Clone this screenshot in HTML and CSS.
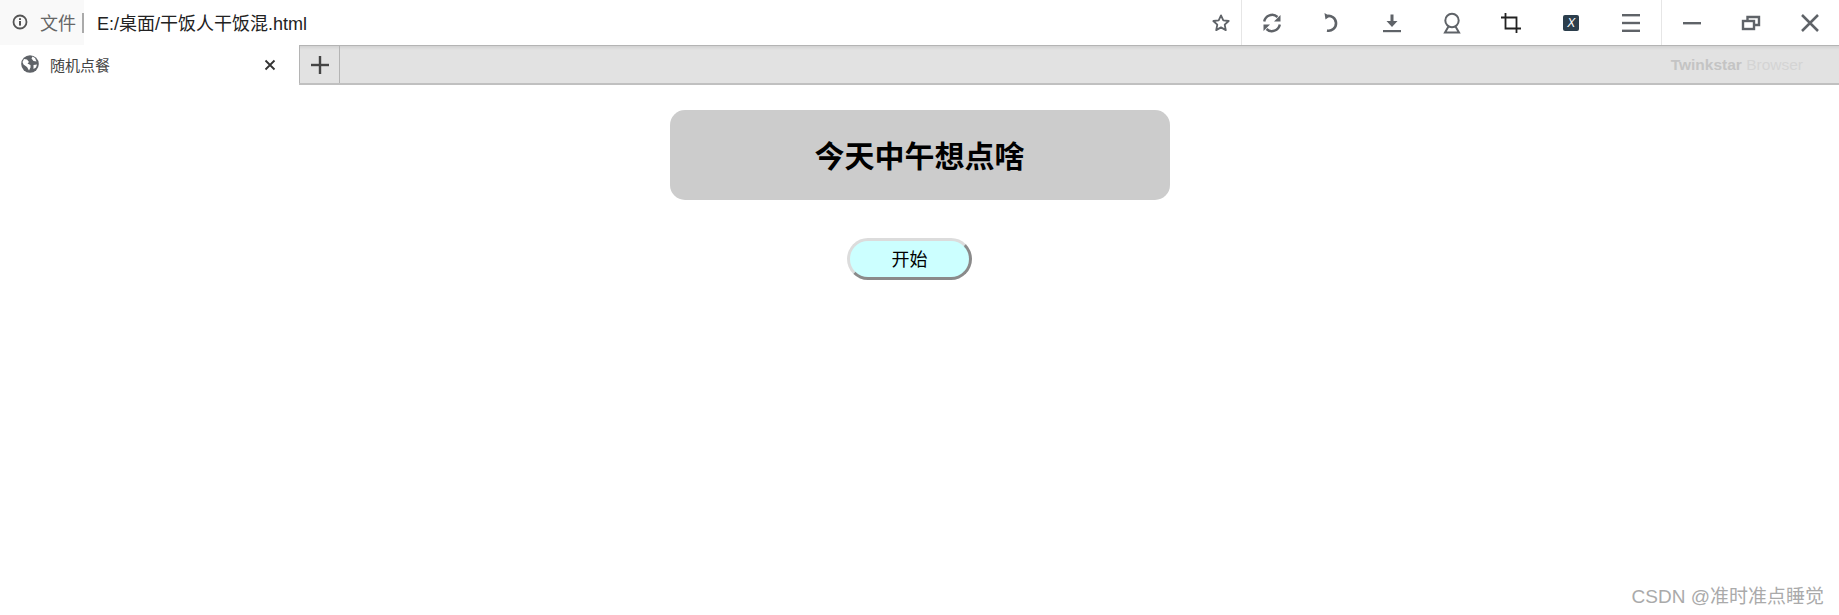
FILE: index.html
```html
<!DOCTYPE html>
<html lang="zh-CN">
<head>
<meta charset="utf-8">
<title>随机点餐</title>
<link rel="stylesheet" href="styles.css">
</head>
<body>
<header class="toolbar">
  <div class="security">
    <svg class="ico-info" width="16" height="16" viewBox="0 0 16 16"><circle cx="8" cy="8" r="6.500" fill="none" stroke="#555" stroke-width="1.800"/><rect x="7" y="7" width="2" height="4.600" fill="#555"/><rect x="7" y="4.200" width="2" height="1.800" fill="#555"/></svg>
    <span class="sec-label">文件</span>
  </div>
  <div class="url">E:/桌面/干饭人干饭混.html</div>
  <div class="star-cell">
    <svg width="20" height="20" viewBox="0 0 20 20"><path d="M10 2.400l2.300 5 5.400.6-4 3.700 1.100 5.400-4.800-2.700-4.800 2.700 1.100-5.400-4-3.700 5.400-.6z" fill="none" stroke="#5f6368" stroke-width="1.800" stroke-linejoin="round"/></svg>
  </div>
  <div class="tools">
    <div class="tool"><svg width="22" height="22" viewBox="0 0 22 22" fill="none" stroke="#5f6368" stroke-width="2.400"><path d="M3.200 9.500A8 8 0 0 1 16.500 5"/><path d="M18.800 12.500A8 8 0 0 1 5.500 17"/><path d="M19.500 3v6.500H13z" fill="#5f6368" stroke="none"/><path d="M2.500 19v-6.500H9z" fill="#5f6368" stroke="none"/></svg></div>
    <div class="tool"><svg width="22" height="22" viewBox="0 0 22 22" fill="none" stroke="#5f6368" stroke-width="2.600"><path d="M5.500 4.200a7.400 7.400 0 1 1 .5 14.300"/><path d="M3.500 1l5.500 3.200-4.500 3.300z" fill="#5f6368" stroke="none"/></svg></div>
    <div class="tool"><svg width="20" height="20" viewBox="0 0 20 20" fill="#5f6368"><path d="M8.500 1.500h3v6.500h4l-5.500 6-5.500-6h4z"/><rect x="1" y="17" width="18" height="2.200"/></svg></div>
    <div class="tool"><svg width="20" height="22" viewBox="0 0 20 22" fill="none" stroke="#5f6368" stroke-width="2"><circle cx="10" cy="8.500" r="6.700"/><path d="M6.500 14.500L3 20.500h14l-3.500-6"/></svg></div>
    <div class="tool"><svg width="22" height="22" viewBox="0 0 22 22" fill="none" stroke="#222" stroke-width="1.800"><path d="M5.500 1v15.500H21"/><path d="M1 5.500h15.500V21"/></svg></div>
    <div class="tool"><div class="app-badge">X</div></div>
    <div class="tool"><svg width="20" height="20" viewBox="0 0 20 20" fill="#5f6368"><rect x="1" y="1" width="18" height="2.400"/><rect x="1" y="8.800" width="18" height="2.400"/><rect x="1" y="16.600" width="18" height="2.400"/></svg></div>
  </div>
  <div class="winctl">
    <div class="win"><svg width="20" height="20" viewBox="0 0 20 20"><rect x="1" y="9" width="18" height="2.400" fill="#5f6368"/></svg></div>
    <div class="win"><svg width="20" height="20" viewBox="0 0 20 20" fill="none" stroke="#5f6368" stroke-width="2.400"><rect x="2" y="8" width="11" height="8"/><path d="M6.500 7V4h11.500v8h-4.500"/></svg></div>
    <div class="win"><svg width="20" height="20" viewBox="0 0 20 20" stroke="#5f6368" stroke-width="2.500"><path d="M2 2l16 16M18 2L2 18"/></svg></div>
  </div>
</header>
<nav class="tabstrip">
  <div class="tab">
    <svg class="globe" width="18" height="18" viewBox="0 0 18 18"><circle cx="9" cy="9" r="8.800" fill="#5f6368"/><path d="M3 4l3 .5 2 2.500-1.500 1.500L9.500 10v2.500L8 15.500 6 12 2.500 9.500 1.500 7zM11.500 1.500l2.500 1.500 1.500 3.500-3-.5-2-2.500zM12.500 10l3.500-.5-1 3-2.500 1.500z" fill="#fff"/></svg>
    <span class="tab-title">随机点餐</span>
    <svg class="tab-close" width="12" height="12" viewBox="0 0 12 12" stroke="#333" stroke-width="1.800"><path d="M1.500 1.500l9 9M10.500 1.500l-9 9"/></svg>
  </div>
  <div class="newtab"><svg width="18" height="18" viewBox="0 0 18 18" fill="#444"><rect x="0" y="7.800" width="18" height="2.400"/><rect x="7.800" y="0" width="2.400" height="18"/></svg></div>
  <div class="brand"><b>Twinkstar</b> Browser</div>
</nav>
<main class="page">
  <h1 class="card"><span class="card-text">今天中午想点啥</span></h1>
  <button class="start" type="button"><span class="start-text">开始</span></button>
</main>
<div class="watermark">CSDN @准时准点睡觉</div>
</body>
</html>
```

FILE: styles.css
```css
* { box-sizing: border-box; }
html, body { margin: 0; height: 100%; }
body {
  width: 1839px;
  height: 615px;
  overflow: hidden;
  position: relative;
  background: #fff;
  font-family: "Liberation Sans", "Noto Sans CJK SC", sans-serif;
  color: #000;
}
.toolbar {
  height: 45px;
  display: flex;
  align-items: center;
  background: #fff;
}
.security {
  width: 84px;
  height: 45px;
  display: flex;
  align-items: center;
  padding-left: 12px;
  padding-bottom: 1px;
  gap: 12px;
  background: #f9f9f9;
  position: relative;
}
.security::after {
  content: "";
  position: absolute;
  right: 0;
  top: 13px;
  height: 20px;
  width: 2px;
  background: #aaa;
}
.sec-label { font-size: 18px; color: #666; }
.url {
  flex: 1;
  padding: 0 0 2px 13px;
  font-size: 18px;
  color: #222;
}
.star-cell {
  width: 40px;
  height: 45px;
  display: flex;
  align-items: center;
  justify-content: center;
}
.tools {
  display: flex;
  width: 421px;
  height: 45px;
  border-left: 1px solid #e6e6e6;
  border-right: 1px solid #e6e6e6;
}
.tool, .win {
  display: flex;
  align-items: center;
  justify-content: center;
  flex: 1;
  height: 45px;
}
.winctl { display: flex; width: 177px; height: 45px; }
.app-badge {
  width: 16px;
  height: 16px;
  border-radius: 2px;
  background: #2c3e4c;
  color: #fff;
  font-size: 12px;
  line-height: 16px;
  text-align: center;
  font-style: italic;
}
.tabstrip {
  height: 40px;
  display: flex;
  align-items: center;
  background: linear-gradient(#d2d2d2, #e2e2e2 4px);
  border-top: 1px solid #b4b4b4;
  border-bottom: 2px solid #c0c0c0;
}
.tab {
  width: 299px;
  height: 40px;
  align-self: flex-start;
  margin-top: -1px;
  background: #fff;
  display: flex;
  align-items: center;
  padding-left: 21px;
}
.tab-title {
  margin-left: 11px;
  flex: 1;
  font-size: 15px;
  color: #444;
  position: relative;
  top: -1px;
}
.globe { position: relative; top: -1px; }
.tab-close { margin-right: 23px; }
.newtab {
  width: 41px;
  height: 100%;
  display: flex;
  align-items: center;
  justify-content: center;
  border-left: 1px solid #b4b4b4;
  border-right: 1px solid #b4b4b4;
}
.brand {
  margin-left: auto;
  margin-right: 36px;
  font-size: 15.500px;
  color: #d4d4d4;
}
.brand b { color: #c4c4c4; }
.page {
  display: flex;
  flex-direction: column;
  align-items: center;
  padding-top: 25px;
}
.card {
  width: 500px;
  height: 90px;
  margin: 0;
  background: #ccc;
  border-radius: 15px;
  display: flex;
  align-items: center;
  justify-content: center;
  font-size: 30px;
  font-weight: bold;
  font-family: "Noto Sans CJK SC", sans-serif;
  line-height: 1;
}
.card-text { margin-top: -2px; }
.start {
  width: 125px;
  height: 42px;
  margin: 38px 20px 0 0;
  padding: 0 0 2px;
  border: 3px solid;
  border-color: #dcdcdc #8a8a8a #8a8a8a #dcdcdc;
  border-radius: 21px;
  background: #cff;
  color: #000;
  font-size: 18px;
  font-family: "Noto Sans CJK SC", sans-serif;
}
.watermark {
  position: absolute;
  right: 15px;
  bottom: 7px;
  font-size: 19px;
  color: #aaa;
  font-family: "Liberation Sans", "Noto Sans CJK SC", sans-serif;
}
```
